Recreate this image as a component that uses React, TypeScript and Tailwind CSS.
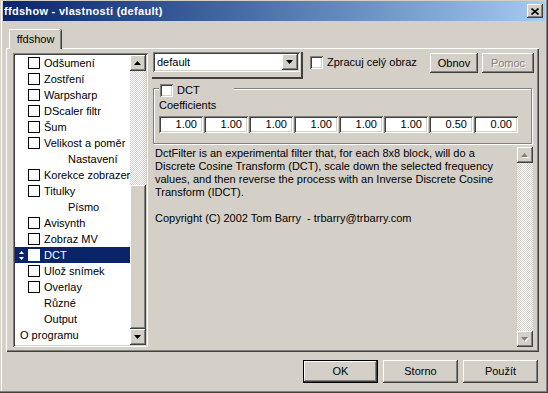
const raised =
  "shadow-[inset_-1px_-1px_#404040,inset_1px_1px_#ffffff,inset_-2px_-2px_#808080,inset_2px_2px_#d4d0c8]"
const sunken =
  "shadow-[inset_1px_1px_#808080,inset_-1px_-1px_#ffffff,inset_2px_2px_#404040,inset_-2px_-2px_#d4d0c8]"
const dither =
  "bg-[image:repeating-conic-gradient(#ffffff_0%_25%,#d4d0c8_0%_50%)] bg-[length:2px_2px]"

function Arrow({ up, disabled }: { up?: boolean; disabled?: boolean }) {
  const pts = up ? "3.5,0 7,4 0,4" : "0,0 7,0 3.5,4"
  return (
    <svg width="8" height="5" viewBox="0 0 8 5">
      {disabled && <polygon points={pts} fill="#ffffff" transform="translate(1,1)" />}
      <polygon points={pts} fill={disabled ? "#808080" : "#000000"} />
    </svg>
  )
}

function ScrollBtn({ up, disabled }: { up?: boolean; disabled?: boolean }) {
  return (
    <div className={`w-[16px] h-[16px] shrink-0 bg-[#d4d0c8] flex items-center justify-center ${raised}`}>
      <Arrow up={up} disabled={disabled} />
    </div>
  )
}

function Check() {
  return <div className={`w-[13px] h-[13px] shrink-0 bg-white ${sunken}`} />
}

function Button({ label, disabled, def, w }: { label: string; disabled?: boolean; def?: boolean; w: string }) {
  return (
    <div className={`${w} h-full flex ${def ? "border border-black" : ""}`}>
      <div className={`flex-1 flex items-center justify-center bg-[#d4d0c8] ${raised}`}>
        <span className={disabled ? "text-[#808080] [text-shadow:1px_1px_#ffffff]" : ""}>{label}</span>
      </div>
    </div>
  )
}

type Item = { t: string; cb?: boolean; pl?: string; sel?: boolean }

const items: Item[] = [
  { t: "Odšumení", cb: true },
  { t: "Zostření", cb: true },
  { t: "Warpsharp", cb: true },
  { t: "DScaler filtr", cb: true },
  { t: "Šum", cb: true },
  { t: "Velikost a poměr", cb: true },
  { t: "Nastavení", pl: "pl-[53px]" },
  { t: "Korekce zobrazeni", cb: true },
  { t: "Titulky", cb: true },
  { t: "Písmo", pl: "pl-[53px]" },
  { t: "Avisynth", cb: true },
  { t: "Zobraz MV", cb: true },
  { t: "DCT", cb: true, sel: true },
  { t: "Ulož snímek", cb: true },
  { t: "Overlay", cb: true },
  { t: "Různé", pl: "pl-[29px]" },
  { t: "Output", pl: "pl-[29px]" },
  { t: "O programu", pl: "pl-[5px]" },
]

function TreeRow({ it }: { it: Item }) {
  if (it.sel) {
    return (
      <div className="h-[16px] flex items-center bg-[#0a246a] text-white pl-[4px]">
        <svg width="5" height="9" viewBox="0 0 5 9">
          <polygon points="2.5,0 5,3 0,3" fill="#ffffff" />
          <polygon points="0,6 5,6 2.5,9" fill="#ffffff" />
        </svg>
        <div className="ml-[4px] w-[12px] h-[12px] bg-white" />
        <span className="ml-[4px]">{it.t}</span>
      </div>
    )
  }
  if (it.cb) {
    return (
      <div className="h-[16px] flex items-center pl-[13px]">
        <div className="w-[12px] h-[12px] border border-black bg-white shrink-0" />
        <span className="ml-[4px]">{it.t}</span>
      </div>
    )
  }
  return <div className={`h-[16px] flex items-center ${it.pl}`}>{it.t}</div>
}

const coeffs = ["1.00", "1.00", "1.00", "1.00", "1.00", "1.00", "0.50", "0.00"]

export default function App() {
  return (
    <div
      className={`w-[548px] h-[393px] overflow-hidden bg-[#d4d0c8] text-black text-[11px] leading-[13px] font-['Liberation_Sans',Arial,sans-serif] flex flex-col px-[3px] pt-[1px] shadow-[inset_-1px_-1px_#404040,inset_-2px_-2px_#808080,inset_1px_1px_#d4d0c8,inset_2px_2px_#ffffff]`}
    >
      {/* title bar */}
      <div className="h-[20px] shrink-0 flex items-center bg-gradient-to-r from-[#0a246a] to-[#a6caf0] pl-[1px]">
        <span className="text-white font-bold tracking-[0.3px]">ffdshow - vlastnosti (default)</span>
        <div className={`ml-auto mr-[2px] w-[16px] h-[14px] bg-[#d4d0c8] flex items-center justify-center ${raised}`}>
          <svg width="8" height="7" viewBox="0 0 8 7">
            <path d="M0.5 0.5 L7.5 6.5 M7.5 0.5 L0.5 6.5" stroke="#000" strokeWidth="1.6" />
          </svg>
        </div>
      </div>

      {/* tab */}
      <div className="mt-[8px] ml-[3px] flex flex-col">
        <div className="ml-[3px] w-[52px] h-[20px] relative z-10 bg-[#d4d0c8] rounded-t-[2px] border-t border-l border-white shadow-[inset_-1px_0_#808080,1px_0_#404040] flex items-start justify-center pt-[3px]">
          ffdshow
        </div>
        <div className="-mt-[1px] w-[533px] h-[304px] flex pl-[7px] pt-[5px] shadow-[inset_1px_1px_#ffffff,inset_-1px_-1px_#404040,inset_-2px_-2px_#808080]">
          {/* tree */}
          <div className={`w-[135px] h-[294px] bg-white p-[2px] flex ${sunken}`}>
            <div className="flex-1 overflow-hidden whitespace-nowrap flex flex-col">
              {items.map((it) => (
                <TreeRow key={it.t} it={it} />
              ))}
            </div>
            <div className="w-[16px] flex flex-col">
              <ScrollBtn up />
              <div className={`h-[114px] ${dither}`} />
              <div className={`h-[144px] bg-[#d4d0c8] ${raised}`} />
              <ScrollBtn />
            </div>
          </div>

          {/* right side */}
          <div className="ml-[4px] -mt-[1px] w-[382px] flex flex-col">
            <div className="flex items-start h-[27px]">
              <div className="w-[151px] h-[27px] border-r-2 border-b-2 border-[#404040]">
                <div className={`ml-[1px] w-[147px] h-[20px] bg-white flex items-center pl-[4px] pr-[2px] ${sunken}`}>
                  <span className="flex-1">default</span>
                  <ScrollBtn />
                </div>
              </div>
              <div className="ml-[7px] mt-[4px] flex items-center">
                <Check />
                <span className="ml-[4px]">Zpracuj celý obraz</span>
              </div>
              <div className="ml-auto mt-[1px] h-[20px] flex gap-[4px]">
                <Button label="Obnov" w="w-[48px]" />
                <Button label="Pomoc" w="w-[52px]" disabled />
              </div>
            </div>

            {/* DCT group */}
            <div className="mt-[9px] ml-[1px] w-[379px] h-[56px] relative border border-[#808080] shadow-[inset_1px_1px_#ffffff,1px_1px_#ffffff] pl-[5px] pt-[10px]">
              <div className="absolute left-[5px] -top-[5px] w-[75px] h-[13px] bg-[#d4d0c8] flex items-center pl-[1px]">
                <Check />
                <span className="ml-[4px]">DCT</span>
              </div>
              <div>Coefficients</div>
              <div className="mt-[4px] flex gap-[1px]">
                {coeffs.map((c, i) => (
                  <div key={i} className={`w-[44px] h-[17px] bg-white flex items-center justify-end pr-[6px] ${sunken}`}>
                    {c}
                  </div>
                ))}
              </div>
            </div>

            {/* description */}
            <div className="mt-[3px] ml-[1px] w-[380px] h-[200px] flex">
              <div className="flex-1 pl-[2px] pt-0">
                DctFilter is an experimental filter that, for each 8x8 block, will do a
                <br />
                Discrete Cosine Transform (DCT), scale down the selected frequency
                <br />
                values, and then reverse the process with an Inverse Discrete Cosine
                <br />
                Transform (IDCT).
                <br />
                <br />
                Copyright (C) 2002 Tom Barry&nbsp; - trbarry@trbarry.com
              </div>
              <div className="w-[16px] flex flex-col">
                <ScrollBtn up disabled />
                <div className={`flex-1 ${dither}`} />
                <ScrollBtn disabled />
              </div>
            </div>
          </div>
        </div>
      </div>

      {/* bottom buttons */}
      <div className="mt-[8px] h-[23px] flex justify-end gap-[5px] mr-[7px]">
        <Button label="OK" w="w-[75px]" def />
        <Button label="Storno" w="w-[75px]" />
        <Button label="Použít" w="w-[75px]" />
      </div>
    </div>
  )
}
